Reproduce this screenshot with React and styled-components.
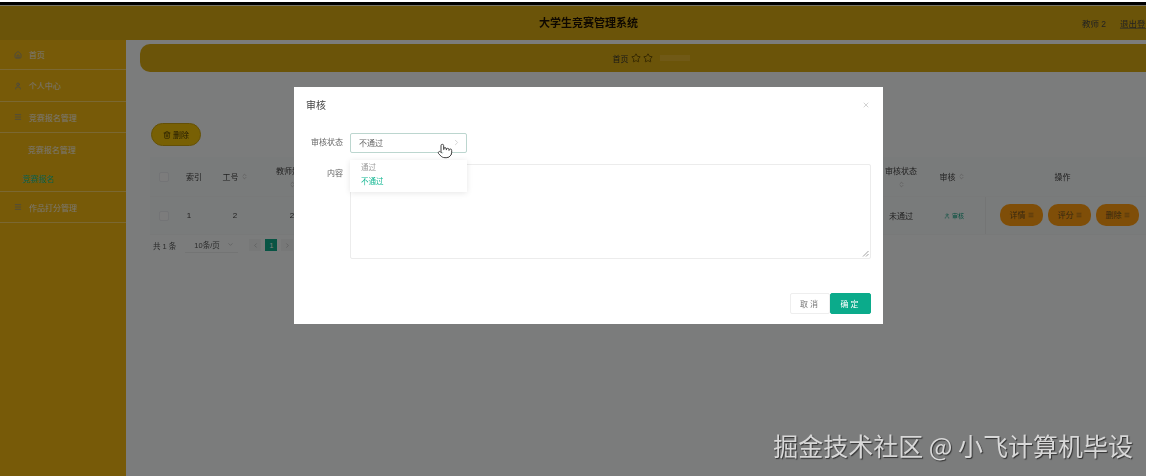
import React from 'react';
import styled, { createGlobalStyle, css } from 'styled-components';
import { ChevronRight, ChevronLeft, ChevronDown, ChevronsUpDown, Pointer, X, Home, User, Menu, Trash2, Star } from 'lucide-react';

const GlobalStyle = createGlobalStyle`
  html, body { margin: 0; padding: 0; background: #fff; }
  * { box-sizing: border-box; }
  body { font-family: "Liberation Sans", "Noto Sans CJK SC", sans-serif; }
`;

// the reference is a soft, re-encoded capture
const soft = css`
  filter: blur(0.35px);
`;

const Screen = styled.div`
  position: relative;
  width: 1150px;
  height: 476px;
  overflow: hidden;
  background: #fff;
  padding: 2px 4px 0 0;
`;

const Shot = styled.div`
  position: relative;
  height: 474px;
  display: flex;
  flex-direction: column;
  border-top: 3px solid #000;
  background: #f6f9f9;
  overflow: hidden;
`;

const Header = styled.header`
  ${soft}
  height: 35px;
  flex: none;
  display: flex;
  align-items: center;
  justify-content: flex-end;
  position: relative;
  overflow: hidden;
  background: #d6a812;
  border-top: 1px solid #efe6c8;
  color: #444;
  font-size: 8.5px;
  gap: 14px;
  white-space: nowrap;
`;

const LogoutLink = styled.span`
  margin-right: -8px;
  text-decoration: underline;
  text-decoration-color: #8a7a3a;
`;

const SystemTitle = styled.h1`
  position: absolute;
  left: 539px;
  top: 10px;
  margin: 0;
  font-size: 11px;
  line-height: 14px;
  font-weight: 700;
  color: #1c1002;
`;

const Body = styled.div`
  ${soft}
  flex: 1;
  display: flex;
  min-height: 0;
`;

const Sidebar = styled.aside`
  width: 126px;
  flex: none;
  background: #eeb410;
  display: flex;
  flex-direction: column;
`;

const NavItem = styled.div`
  height: ${(p) => p.$height}px;
  display: flex;
  align-items: center;
  gap: 7px;
  padding-left: ${(p) => p.$indent}px;
  font-size: 8px;
  color: ${(p) => (p.$active ? '#13c2a0' : '#f4efe0')};
  border-bottom: ${(p) => (p.$plain ? 'none' : '1px solid #f6d064')};
  svg { flex: none; color: #7b8aa8; }
`;

const Main = styled.main`
  flex: 1;
  min-width: 0;
  padding: 4px 0 0 14px;
`;

const Crumb = styled.div`
  height: 28px;
  display: flex;
  align-items: center;
  justify-content: center;
  gap: 2px;
  padding-left: 16px;
  background: #d6a812;
  border-radius: 10px 0 0 10px;
  font-size: 8px;
  color: #333;
  svg { color: #5c4500; }
`;

const CrumbTail = styled.span`
  width: 30px;
  height: 6px;
  margin-left: 5px;
  background: #e0b22c;
`;

const DeleteButton = styled.button`
  display: flex;
  align-items: center;
  justify-content: center;
  gap: 2px;
  width: 50px;
  height: 23px;
  margin: 51px 0 0 11px;
  padding: 0;
  background: #f0c009;
  border: 1px solid #c9a10c;
  border-radius: 12px;
  font: inherit;
  font-size: 8px;
  color: #4a3a05;
`;

const Table = styled.div`
  margin: 11px 0 0 10px;
  background: #f3f6f6;
`;

const Row = styled.div`
  display: grid;
  grid-template-columns: 28px 32px 50px 64px 1fr 36px 66px 161px;
  height: ${(p) => p.$height}px;
  align-items: center;
  justify-items: center;
  font-size: 8px;
  color: #444;
  border-bottom: 1px solid #f0f2f2;
`;

const Check = styled.span`
  width: 10px;
  height: 10px;
  border: 1px solid #e6e8ec;
  border-radius: 2px;
  background: #f8f9f9;
`;

const HeadCell = styled.span`
  display: flex;
  flex-direction: ${(p) => (p.$stack ? 'column' : 'row')};
  align-items: center;
  gap: ${(p) => (p.$stack ? 5 : 2)}px;
  white-space: nowrap;
  svg { color: #aaa; }
`;

const ActionHead = styled(HeadCell)`
  margin-right: 6px;
`;

const IndexCell = styled.span`
  margin-right: 10px;
`;

const ReviewLink = styled.span`
  display: flex;
  align-items: center;
  gap: 2px;
  font-size: 6px;
  color: #0f9f7f;
  margin-left: 4px;
`;

const Actions = styled.div`
  justify-self: stretch;
  height: 100%;
  display: flex;
  align-items: center;
  justify-content: flex-start;
  gap: 5px;
  padding: 0 0 2px 14px;
  border-left: 1px solid #e8ebeb;
`;

const ActionButton = styled.span`
  width: 43px;
  height: 22px;
  display: flex;
  align-items: center;
  justify-content: center;
  gap: 2px;
  border-radius: 10px;
  background: #fe9c10;
  font-size: 8px;
  color: #6e5020;
`;

const Pager = styled.div`
  display: flex;
  align-items: center;
  height: 20px;
  padding-left: 13px;
  font-size: 7.5px;
  color: #555;
`;

const SizeSelect = styled.span`
  width: 53px;
  height: 16px;
  margin-left: 9px;
  display: flex;
  align-items: center;
  justify-content: space-between;
  padding: 0 4px 0 9px;
  border-bottom: 1px solid #e6e9e9;
  svg { color: #aaa; }
`;

const PageButton = styled.span`
  width: 12px;
  height: 12px;
  display: flex;
  align-items: center;
  justify-content: center;
  margin-left: ${(p) => p.$gap}px;
  background: ${(p) => (p.$on ? '#10a888' : '#eef0f0')};
  color: ${(p) => (p.$on ? '#fff' : '#aaa')};
  font-size: 7px;
`;

const Overlay = styled.div`
  position: absolute;
  inset: 0;
  background: rgba(0, 0, 0, 0.5);
  padding: 82px 0 0 294px;
`;

const Modal = styled.section`
  ${soft}
  position: relative;
  width: 589px;
  height: 237px;
  background: #fff;
  padding: 11px 12px 0 12px;
  display: flex;
  flex-direction: column;
`;

const ModalHead = styled.div`
  display: flex;
  align-items: center;
  justify-content: space-between;
  height: 13px;
  margin-bottom: 22px;
  font-size: 10px;
  color: #444;
  svg { color: #bbb; margin-right: 1px; }
`;

const FormRow = styled.div`
  display: flex;
  gap: 7px;
  margin-top: ${(p) => p.$top || 0}px;
`;

const Label = styled.label`
  width: 37px;
  flex: none;
  text-align: right;
  font-size: 8px;
  line-height: 20px;
  color: #666;
  white-space: nowrap;
`;

const SelectBox = styled.div`
  width: 117px;
  height: 20px;
  display: flex;
  align-items: center;
  justify-content: space-between;
  padding: 0 5px 2px 8px;
  border: 1px solid #bcd6cf;
  border-radius: 2px;
  font-size: 8px;
  color: #666;
  svg { color: #c8c8c8; }
`;

const TextArea = styled.div`
  position: relative;
  width: 522px;
  height: 95px;
  border: 1px solid #ececec;
  border-radius: 2px;
`;

const ResizeGrip = styled.svg`
  position: absolute;
  right: 1px;
  bottom: 1px;
`;

const Dropdown = styled.ul`
  position: absolute;
  left: 56px;
  top: 73px;
  width: 117px;
  height: 32px;
  margin: 0;
  padding: 1px 0 0 11px;
  list-style: none;
  background: #fff;
  box-shadow: 0 1px 6px rgba(0, 0, 0, 0.1);
  z-index: 1;
`;

const Option = styled.li`
  height: 14px;
  line-height: 14px;
  font-size: 7.5px;
  color: ${(p) => (p.$selected ? '#14b793' : '#999')};
`;

const Cursor = styled(Pointer)`
  position: absolute;
  left: 143px;
  top: 56px;
  z-index: 2;
  fill: #fff;
  color: #444;
`;

const ModalFoot = styled.div`
  display: flex;
  justify-content: flex-end;
  margin-top: 34px;
`;

const FootButton = styled.button`
  width: ${(p) => (p.$primary ? 41 : 40)}px;
  height: 21px;
  padding: 0;
  border: 1px solid ${(p) => (p.$primary ? '#0bab8b' : '#eee')};
  border-radius: 2px;
  background: ${(p) => (p.$primary ? '#0bab8b' : '#fff')};
  color: ${(p) => (p.$primary ? '#fff' : '#777')};
  font: inherit;
  font-size: 8px;
  letter-spacing: 2px;
`;

const Watermark = styled.div`
  position: absolute;
  right: 13px;
  bottom: 16px;
  font-family: "Noto Sans CJK SC", sans-serif;
  font-size: 25px;
  line-height: 30px;
  color: #d8d8d8;
  text-shadow: 1px 1px 1px #333;
  white-space: nowrap;
`;

const menu = [
  { label: '首页', icon: Home, height: 30, indent: 14 },
  { label: '个人中心', icon: User, height: 32, indent: 14 },
  { label: '竞赛报名管理', icon: Menu, height: 31, indent: 14 },
  { label: '竞赛报名管理', height: 32, indent: 28, plain: true },
  { label: '竞赛报名', height: 27, indent: 22, active: true },
  { label: '作品打分管理', icon: Menu, height: 31, indent: 14 },
];

const sortIcon = <ChevronsUpDown size={7} />;

export default function App() {
  return (
    <Screen>
      <GlobalStyle />
      <Shot>
        <Header>
          <SystemTitle>大学生竞赛管理系统</SystemTitle>
          <span>教师 2</span>
          <LogoutLink>退出登录</LogoutLink>
        </Header>
        <Body>
          <Sidebar>
            {menu.map((item) => (
              <NavItem key={item.label + item.indent} $height={item.height} $indent={item.indent} $plain={item.plain} $active={item.active}>
                {item.icon && <item.icon size={8} />}
                {item.label}
              </NavItem>
            ))}
          </Sidebar>
          <Main>
            <Crumb>
              首页
              <Star size={10} />
              <Star size={10} />
              <CrumbTail />
            </Crumb>
            <DeleteButton>
              <Trash2 size={8} />
              删除
            </DeleteButton>
            <Table>
              <Row $height={40}>
                <Check />
                <HeadCell>索引</HeadCell>
                <HeadCell>工号 {sortIcon}</HeadCell>
                <HeadCell $stack>教师姓名 {sortIcon}</HeadCell>
                <span />
                <HeadCell $stack>审核状态 {sortIcon}</HeadCell>
                <HeadCell>审核 {sortIcon}</HeadCell>
                <ActionHead>操作</ActionHead>
              </Row>
              <Row $height={38}>
                <Check />
                <IndexCell>1</IndexCell>
                <span>2</span>
                <span>2</span>
                <span />
                <span>未通过</span>
                <ReviewLink><User size={6} />审核</ReviewLink>
                <Actions>
                  <ActionButton>详情 <Menu size={6} /></ActionButton>
                  <ActionButton>评分 <Menu size={6} /></ActionButton>
                  <ActionButton>删除 <Menu size={6} /></ActionButton>
                </Actions>
              </Row>
            </Table>
            <Pager>
              共 1 条
              <SizeSelect>10条/页 <ChevronDown size={7} /></SizeSelect>
              <PageButton $gap={11}><ChevronLeft size={7} /></PageButton>
              <PageButton $gap={4} $on>1</PageButton>
              <PageButton $gap={4}><ChevronRight size={7} /></PageButton>
            </Pager>
          </Main>
        </Body>
        <Overlay>
          <Modal>
            <ModalHead>
              审核
              <X size={8} />
            </ModalHead>
            <FormRow>
              <Label>审核状态</Label>
              <SelectBox>
                不通过
                <ChevronRight size={9} />
              </SelectBox>
            </FormRow>
            <Dropdown>
              <Option>通过</Option>
              <Option $selected>不通过</Option>
            </Dropdown>
            <Cursor size={16} strokeWidth={1.5} />
            <FormRow $top={11}>
              <Label>内容</Label>
              <TextArea>
                <ResizeGrip width="7" height="7" viewBox="0 0 7 7">
                  <path d="M1 6.5L6.5 1M4 6.5L6.5 4" stroke="#888" strokeWidth="0.8" />
                </ResizeGrip>
              </TextArea>
            </FormRow>
            <ModalFoot>
              <FootButton>取消</FootButton>
              <FootButton $primary>确定</FootButton>
            </ModalFoot>
          </Modal>
          <Watermark>掘金技术社区 @ 小飞计算机毕设</Watermark>
        </Overlay>
      </Shot>
    </Screen>
  );
}
